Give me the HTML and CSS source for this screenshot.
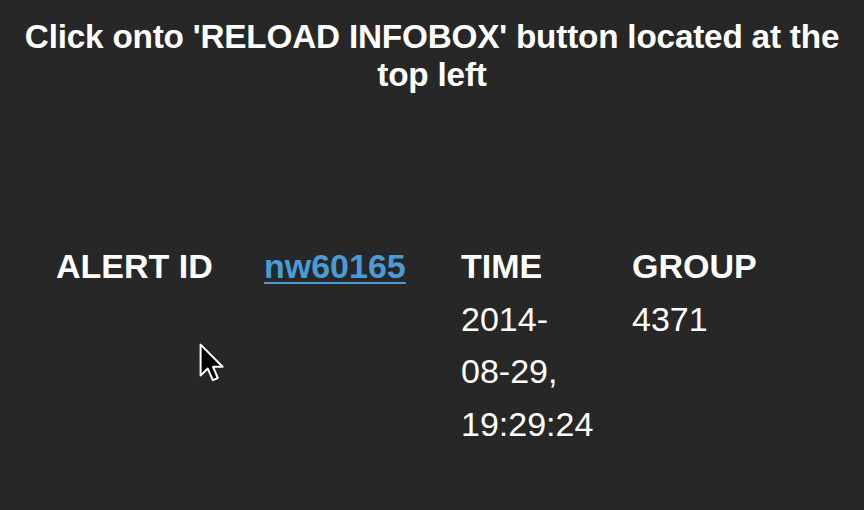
FILE: index.html
```html
<!DOCTYPE html>
<html>
<head>
<meta charset="utf-8">
<link rel="stylesheet" href="styles.css">
</head>
<body>
<div class="page">
  <h1 class="title">Click onto 'RELOAD INFOBOX' button located at the top left</h1>
  <div class="info">
    <div class="col col-label">
      <div class="head">ALERT ID</div>
    </div>
    <div class="col col-id">
      <a class="link" href="#">nw60165</a>
    </div>
    <div class="col col-time">
      <div class="head">TIME</div>
      <div class="val"><span class="nb">2014-</span><wbr><span class="nb">08-29,</span> <span class="nb">19:29:24</span></div>
    </div>
    <div class="col col-group">
      <div class="head">GROUP</div>
      <div class="val">4371</div>
    </div>
  </div>
  <svg class="cursor" width="26" height="40" viewBox="0 0 13 20">
    <path d="M0.8 0.8 L0.8 16.2 L4.4 12.8 L6.9 18.6 L9.4 17.5 L7 11.9 L11.8 11.9 Z" fill="#000" stroke="#fff" stroke-width="1" stroke-linejoin="round"/>
  </svg>
</div>
</body>
</html>
```
FILE: styles.css
```css
html, body {
  margin: 0;
  padding: 0;
  background: #272727;
  height: 100%;
}
.page {
  position: relative;
  width: 864px;
  height: 510px;
  overflow: hidden;
  font-family: "Liberation Sans", Arial, sans-serif;
  color: #ffffff;
}
.title {
  margin: 0;
  padding: 18px 10px 0;
  font-size: 33.3px;
  font-weight: bold;
  line-height: 38px;
  text-align: center;
  letter-spacing: -0.2px;
}
.info {
  display: grid;
  grid-template-columns: 208px 197px 171px auto;
  padding-left: 56px;
  margin-top: 146px;
  font-size: 34px;
  line-height: 52.5px;
}
.head {
  font-weight: bold;
}
.nb {
  white-space: nowrap;
}
.link {
  color: #4a9bd8;
  font-weight: bold;
  text-decoration: underline;
  text-underline-offset: 4px;
  text-decoration-thickness: 2px;
}
.cursor {
  position: absolute;
  left: 199px;
  top: 343px;
}
```
